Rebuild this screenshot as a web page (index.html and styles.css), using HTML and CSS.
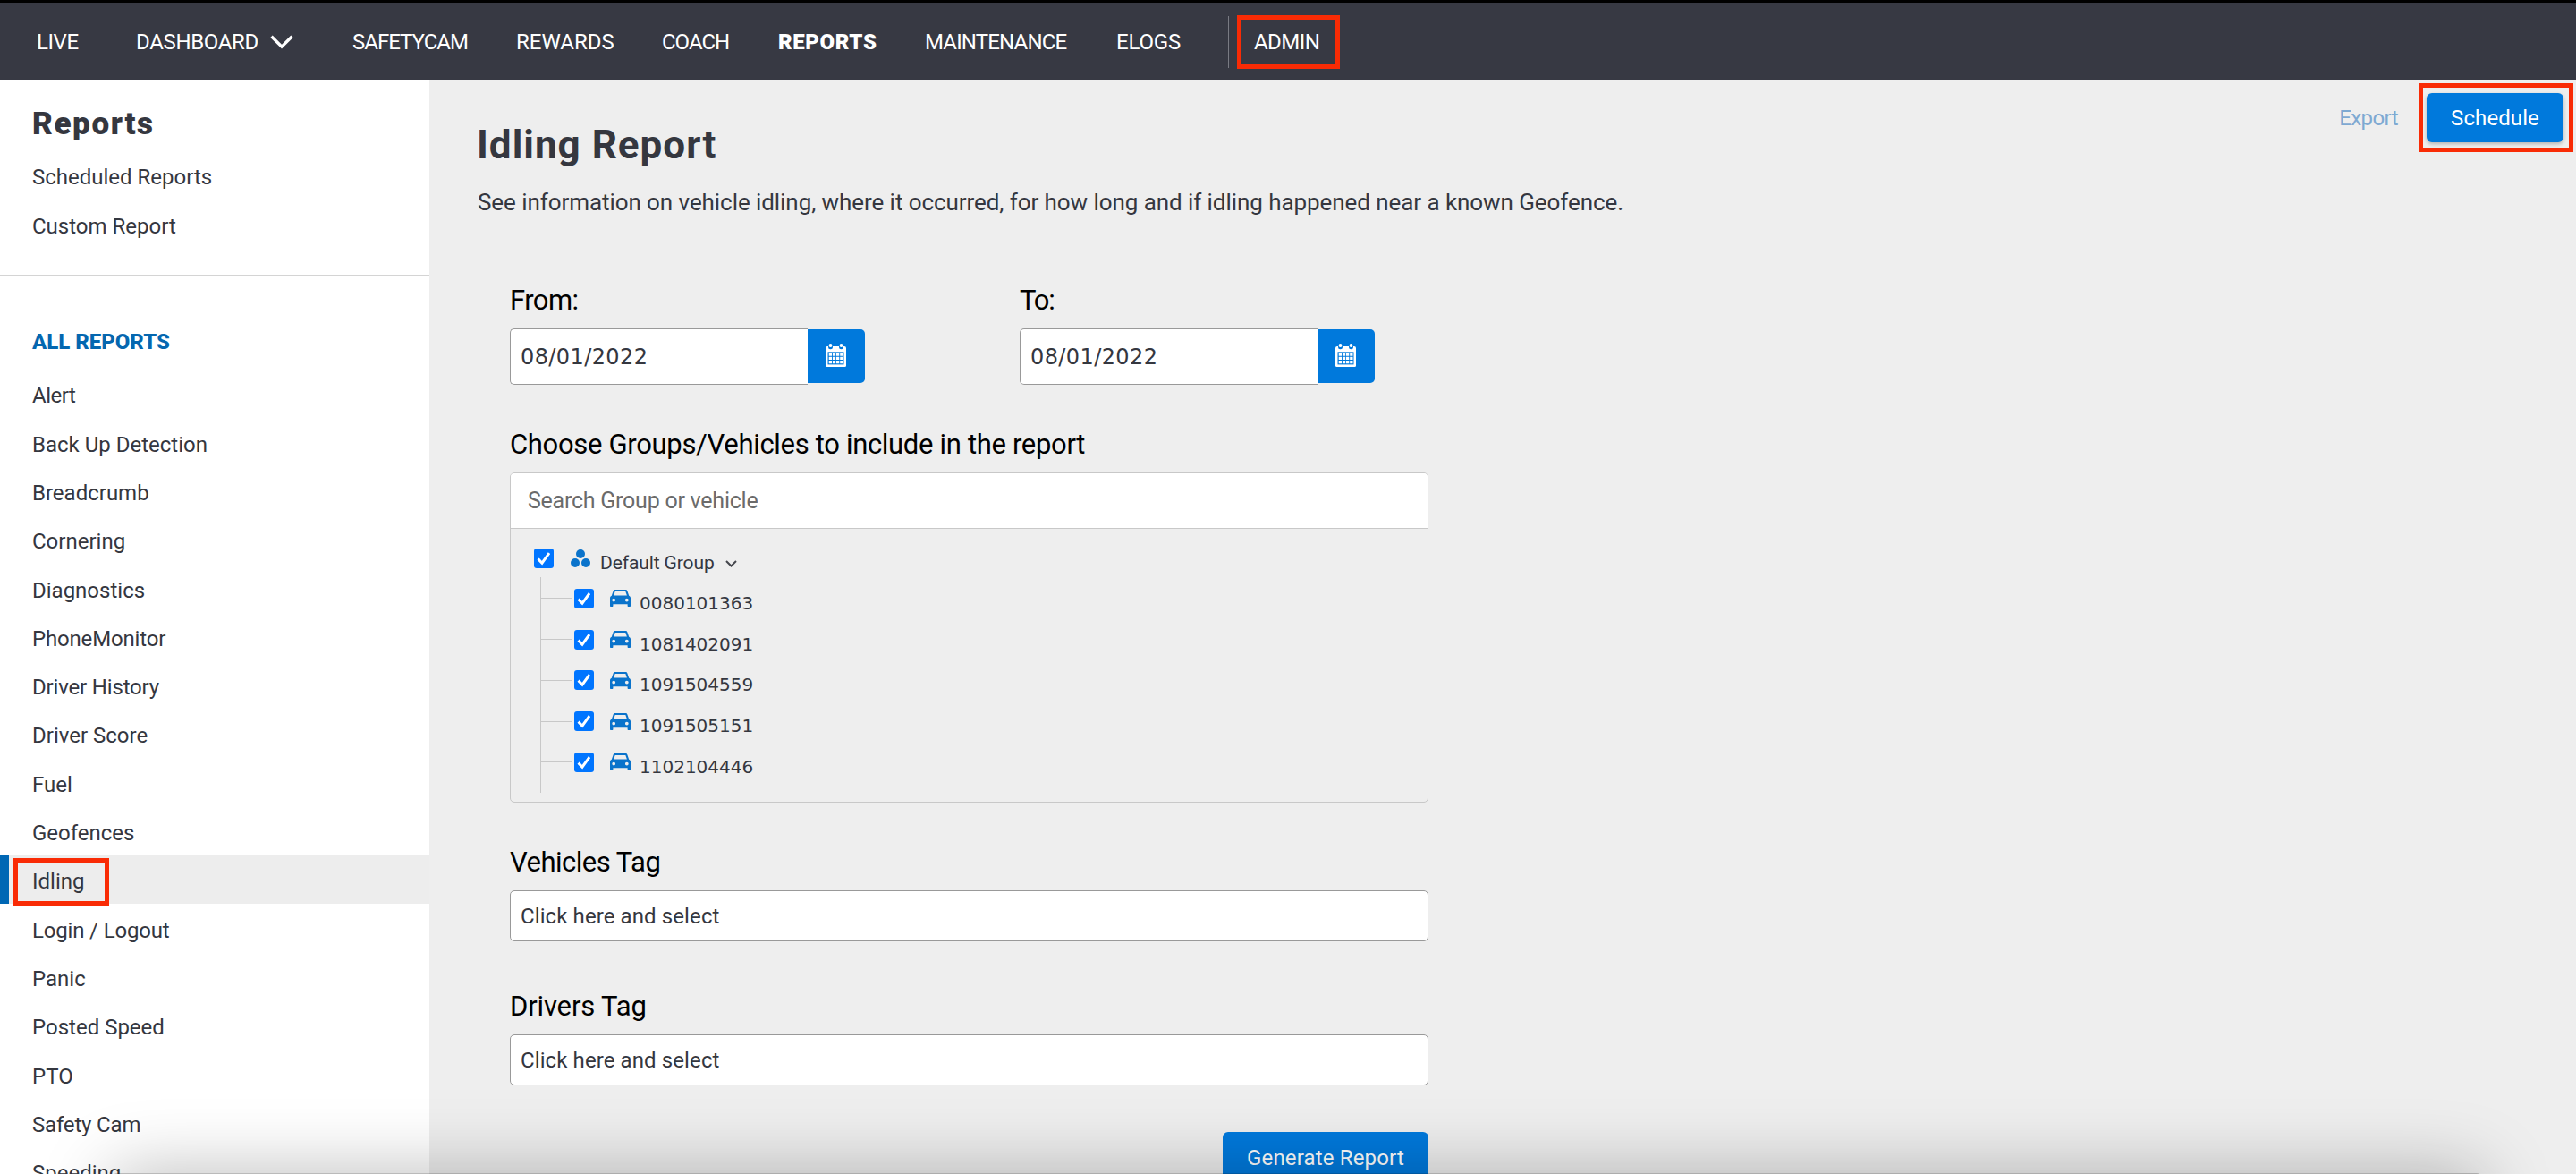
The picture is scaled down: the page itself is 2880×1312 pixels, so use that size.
FILE: index.html
```html
<!DOCTYPE html>
<html lang="en">
<head>
<meta charset="utf-8">
<title>Idling Report</title>
<link rel="stylesheet" href="styles.css">
</head>
<body>
<svg class="sprite" aria-hidden="true">
  <symbol id="i-check" viewBox="0 0 22 22"><path d="M4.6 11.6 9 16.2 17 5.2" fill="none" stroke="#fff" stroke-width="3"/></symbol>
  <symbol id="i-car" viewBox="0 0 23 19"><path fill="currentColor" fill-rule="evenodd" d="M5.6 0H17.4C18.3 0 19 .5 19.3 1.3L21.2 6.8C22.3 7.2 23 8.2 23 9.4V18C23 18.6 22.6 19 22 19H20.6C20 19 19.600 18.600 19.600 18V16.300H3.400V18C3.400 18.600 3 19 2.400 19H1C.4 19 0 18.600 0 18V9.400C0 8.200 .7 7.200 1.800 6.800L3.700 1.300C4 .5 4.700 0 5.600 0ZM5.700 1.900 4.100 6.600H18.900L17.300 1.900ZM4.200 9.700A1.900 1.900 0 1 0 4.200 13.500A1.900 1.900 0 1 0 4.200 9.700ZM18.800 9.700A1.900 1.900 0 1 0 18.800 13.500A1.900 1.900 0 1 0 18.800 9.700Z"/></symbol>
  <symbol id="i-group" viewBox="0 0 22 20"><g fill="currentColor"><circle cx="11" cy="5" r="5"/><circle cx="5" cy="15" r="5"/><circle cx="17" cy="15" r="5"/></g></symbol>
  <symbol id="i-cal" viewBox="0 0 23 26"><path fill="#fff" d="M2 3H21Q23 3 23 5V24.500Q23 26 21.500 26H1.500Q0 26 0 24.500V5Q0 3 2 3Z"/><path d="M2.500 9.300H20.500V23.400H2.500Z" fill="#0079dc"/><path fill="#fff" d="M3.700 10.500h3.300v3.300h-3.300zM7.900 10.500h3.300v3.300h-3.300zM12 10.500h3.300v3.300h-3.300zM16.200 10.500h3.300v3.300h-3.300zM3.700 14.700h3.300v3.300h-3.300zM7.900 14.700h3.300v3.300h-3.300zM12 14.700h3.300v3.300h-3.300zM16.200 14.700h3.300v3.300h-3.300zM3.700 18.900h3.300v3.300h-3.300zM7.900 18.900h3.300v3.300h-3.300zM12 18.900h3.300v3.300h-3.300zM16.200 18.900h3.300v3.300h-3.300z"/><circle cx="5.500" cy="3.700" r="2.500" fill="#0079dc"/><circle cx="17.500" cy="3.700" r="2.500" fill="#0079dc"/><circle cx="5.500" cy="2" r="1.900" fill="#fff"/><circle cx="17.500" cy="2" r="1.900" fill="#fff"/></symbol>
</svg>

<nav class="topnav">
  <a class="t-live">LIVE</a>
  <a class="dashboard"><span>DASHBOARD</span><svg width="26" height="16" viewBox="0 0 26 16"><path d="M1.500 1.700 13 13.200 24.500 1.700" fill="none" stroke="#fff" stroke-width="3.400"/></svg></a>
  <a class="t-tight">SAFETYCAM</a>
  <a>REWARDS</a>
  <a class="t-tight">COACH</a>
  <a class="current">REPORTS</a>
  <a class="t-maint">MAINTENANCE</a>
  <a class="t-elogs">ELOGS</a>
  <i class="divider"></i>
  <a class="admin marked">ADMIN</a>
</nav>

<div class="page">
  <aside class="sidebar">
    <h2>Reports</h2>
    <a class="item">Scheduled Reports</a>
    <a class="item">Custom Report</a>
    <hr>
    <h3>ALL REPORTS</h3>
    <a class="item t-alert">Alert</a>
    <a class="item">Back Up Detection</a>
    <a class="item">Breadcrumb</a>
    <a class="item">Cornering</a>
    <a class="item">Diagnostics</a>
    <a class="item t-snug">PhoneMonitor</a>
    <a class="item t-snug">Driver History</a>
    <a class="item">Driver Score</a>
    <a class="item">Fuel</a>
    <a class="item">Geofences</a>
    <a class="item active">Idling<i class="mark"></i></a>
    <a class="item t-snug">Login / Logout</a>
    <a class="item">Panic</a>
    <a class="item">Posted Speed</a>
    <a class="item">PTO</a>
    <a class="item t-snug">Safety Cam</a>
    <a class="item">Speeding</a>
  </aside>

  <main class="content">
    <header class="intro">
      <div class="heading">
        <h1>Idling Report</h1>
        <p>See information on vehicle idling, where it occurred, for how long and if idling happened near a known Geofence.</p>
      </div>
      <div class="actions">
        <a class="export">Export</a>
        <div class="schedule marked"><button class="btn">Schedule</button></div>
      </div>
    </header>

    <form class="form">
      <div class="dates">
        <div class="date">
          <label class="t-from">From:</label>
          <div class="picker"><div class="field">08/01/2022</div><span class="cal"><svg width="23" height="26"><use href="#i-cal"/></svg></span></div>
        </div>
        <div class="date">
          <label class="t-to">To:</label>
          <div class="picker"><div class="field">08/01/2022</div><span class="cal"><svg width="23" height="26"><use href="#i-cal"/></svg></span></div>
        </div>
      </div>

      <label class="choose">Choose Groups/Vehicles to include in the report</label>
      <div class="groups">
        <div class="search">Search Group or vehicle</div>
        <div class="group"><span class="check"><svg width="22" height="22"><use href="#i-check"/></svg></span><svg class="g-icon" width="22" height="20"><use href="#i-group"/></svg><span class="g-name">Default Group</span><svg class="g-arrow" width="13" height="8" viewBox="0 0 13 8"><path d="M1 1 6.500 6.500 12 1" fill="none" stroke="#45474d" stroke-width="2"/></svg></div>
        <ul class="vehicles">
          <li><span class="check"><svg width="22" height="22"><use href="#i-check"/></svg></span><svg class="car" width="23" height="19"><use href="#i-car"/></svg><span class="id">0080101363</span></li>
          <li><span class="check"><svg width="22" height="22"><use href="#i-check"/></svg></span><svg class="car" width="23" height="19"><use href="#i-car"/></svg><span class="id">1081402091</span></li>
          <li><span class="check"><svg width="22" height="22"><use href="#i-check"/></svg></span><svg class="car" width="23" height="19"><use href="#i-car"/></svg><span class="id">1091504559</span></li>
          <li><span class="check"><svg width="22" height="22"><use href="#i-check"/></svg></span><svg class="car" width="23" height="19"><use href="#i-car"/></svg><span class="id">1091505151</span></li>
          <li><span class="check"><svg width="22" height="22"><use href="#i-check"/></svg></span><svg class="car" width="23" height="19"><use href="#i-car"/></svg><span class="id">1102104446</span></li>
        </ul>
      </div>

      <label class="tag t-vehicles">Vehicles Tag</label>
      <div class="select">Click here and select</div>
      <label class="tag tag-drivers">Drivers Tag</label>
      <div class="select">Click here and select</div>
      <button class="btn generate" type="button">Generate Report</button>
    </form>
  </main>
</div>
<div class="dock-edge"><div class="dock-shadow"></div></div>
</body>
</html>
```
FILE: styles.css
```css
* { box-sizing: border-box; }

body {
  margin: 0;
  height: 1312px;
  overflow: hidden;
  position: relative;
  display: flex;
  flex-direction: column;
  background: #eee;
  color: #35373f;
  font: 24px/30px Roboto, "Liberation Sans", sans-serif;
}

h1, h2, h3, p, ul { margin: 0; padding: 0; }
svg { display: block; flex: none; }
.sprite { position: absolute; width: 0; height: 0; }

/* Top navigation */
.topnav {
  flex: none;
  height: 89px;
  border-top: 3px solid #000;
  background: #373943;
  padding: 1px 0 0 41px;
  display: grid;
  grid-template-columns: 100px 253px 183px 163px 130px 164px 214px 125px 10px 115px;
  align-items: center;
  color: #fff;
}
.dashboard {
  width: 199px;
  height: 56px;
  padding-left: 11px;
  display: flex;
  align-items: center;
  gap: 13px;
  letter-spacing: -.34px;
}
.t-live { letter-spacing: -.44px; }
.t-tight { letter-spacing: -1px; }
.t-maint { letter-spacing: -.83px; }
.t-elogs { letter-spacing: -.17px; }
.current { font-weight: 900; letter-spacing: .6px; }
.divider { width: 1px; height: 58px; background: #797b83; }
.marked { border: 5px solid #f92b05; }
.admin {
  height: 60px;
  line-height: 50px;
  padding-left: 14px;
  letter-spacing: -.55px;
}

.page { flex: 1; min-height: 0; display: flex; }

/* Sidebar */
.sidebar {
  flex: none;
  width: 480px;
  background: #fff;
  padding-top: 30px;
  overflow: hidden;
}
.sidebar h2 {
  padding-left: 36px;
  font-size: 35px;
  line-height: 40px;
  font-weight: 900;
  letter-spacing: 1.6px;
  margin-bottom: 10.200px;
}
.item {
  display: block;
  position: relative;
  height: 54.300px;
  padding: 4.300px 0 0 36px;
  line-height: 51px;
}
.t-alert { letter-spacing: -.5px; }
.t-snug { letter-spacing: -.17px; }
.sidebar hr {
  margin: 29px 0 47px;
  border: 0;
  height: 1px;
  background: #d4d4d4;
}
.sidebar h3 {
  padding-left: 36px;
  font-size: 24px;
  line-height: 54px;
  font-weight: 800;
  color: #0467b0;
  margin-bottom: 4.300px;
}
.active {
  background: #ededed;
  border-left: 10px solid #0067b4;
  padding-left: 26px;
}
.mark {
  position: absolute;
  left: 5px;
  top: 3px;
  width: 107px;
  height: 53px;
  border: 5px solid #f92b05;
  z-index: 1;
}

/* Page heading */
.content { flex: 1; min-width: 0; }
.intro { display: flex; justify-content: space-between; align-items: flex-start; height: 229px; }
.heading { padding: 47px 0 0 53px; }
h1 { font-size: 44px; line-height: 52px; font-weight: 700; letter-spacing: 1px; margin-bottom: 22px; }
.heading p { font-size: 26px; line-height: 32px; letter-spacing: -.07px; padding-left: 1px; }
.actions { display: flex; align-items: center; gap: 23px; padding: 4px 3px 0 0; }
.export { color: #7ea9d2; letter-spacing: -.59px; }
.schedule { width: 173px; height: 77px; padding: 6px 4px 0; }
.btn {
  display: block;
  border: 0;
  border-radius: 6px;
  background: #0079dc;
  color: #fff;
  font: inherit;
  padding: 0;
  text-align: center;
}
.schedule .btn { width: 153px; height: 55px; letter-spacing: .1px; box-shadow: 0 2px 4px rgba(0, 0, 0, .25); }

/* Report form */
.form { width: 1027px; margin-left: 90px; }
label { display: block; color: #000; font-size: 31px; line-height: 36px; letter-spacing: -.32px; }
.dates { display: flex; gap: 173px; }
.t-from { letter-spacing: -.58px; }
.t-to { letter-spacing: -1.200px; }
.picker { display: flex; margin-top: 13px; width: 397px; }
.field {
  width: 333px;
  height: 63px;
  background: #fff;
  border: 1px solid #999;
  border-right: 0;
  border-radius: 5px 0 0 5px;
  padding-left: 11px;
  font-family: "DejaVu Sans", sans-serif;
  line-height: 62px;
  letter-spacing: .4px;
}
.cal {
  width: 64px;
  height: 60px;
  margin-top: 1px;
  border-radius: 0 5px 5px 0;
  background: #0079dc;
  display: flex;
  padding: 16px 0 0 20px;
}
.choose { margin: 49px 0 13px; }
.groups { height: 369px; border: 1px solid #c8c8c8; border-radius: 5px; overflow: hidden; }
.search {
  height: 62px;
  background: #fff;
  border-bottom: 1px solid #c8c8c8;
  padding-left: 19px;
  font-size: 25px;
  line-height: 61px;
  letter-spacing: -.24px;
  color: #6b6b6b;
}
.group { height: 54px; padding: 12px 0 0 26px; display: flex; align-items: center; color: #0a73cb; }
.check { width: 22px; height: 22px; border-radius: 3px; background: #0075ff; flex: none; }
.g-icon { margin-left: 19px; }
.g-name { margin-left: 11px; padding-top: 9px; font-size: 21px; letter-spacing: -.1px; color: #35373f; }
.g-arrow { margin: 11px 0 0 12px; }
.vehicles { list-style: none; margin-left: 33px; padding: 1px 0 11px; border-left: 1px solid #c8c8c8; }
.vehicles li { height: 45.750px; display: flex; align-items: center; color: #0a73cb; }
.vehicles li::before { content: ""; width: 35px; height: 1px; background: #c8c8c8; margin-right: 2px; }
.car { margin-left: 18px; }
.id { margin-left: 10px; padding-top: 10px; font-family: "DejaVu Sans", sans-serif; font-size: 20px; color: #35373f; }

.tag { margin: 49px 0 13px; }
.t-vehicles { letter-spacing: -.51px; }
.tag-drivers { margin-top: 55px; letter-spacing: -.15px; }
.select {
  height: 57px;
  background: #fff;
  border: 1px solid #999;
  border-radius: 5px;
  padding-left: 11px;
  line-height: 56px;
  letter-spacing: .1px;
}
.generate { width: 230px; height: 47px; line-height: 58px; border-radius: 6px 6px 0 0; margin: 52px 0 0 auto; letter-spacing: .16px; }

/* Dock edge and its shadow along the bottom of the screen */
.dock-edge {
  position: absolute;
  left: 0;
  right: 0;
  bottom: 0;
  height: 100px;
  overflow: hidden;
  pointer-events: none;
}
.dock-shadow {
  margin: 99px 105px 0 125px;
  height: 80px;
  border-radius: 6px;
  background: rgba(0, 0, 0, .27);
  box-shadow: 0 0 80px rgba(0, 0, 0, .28);
}
```
